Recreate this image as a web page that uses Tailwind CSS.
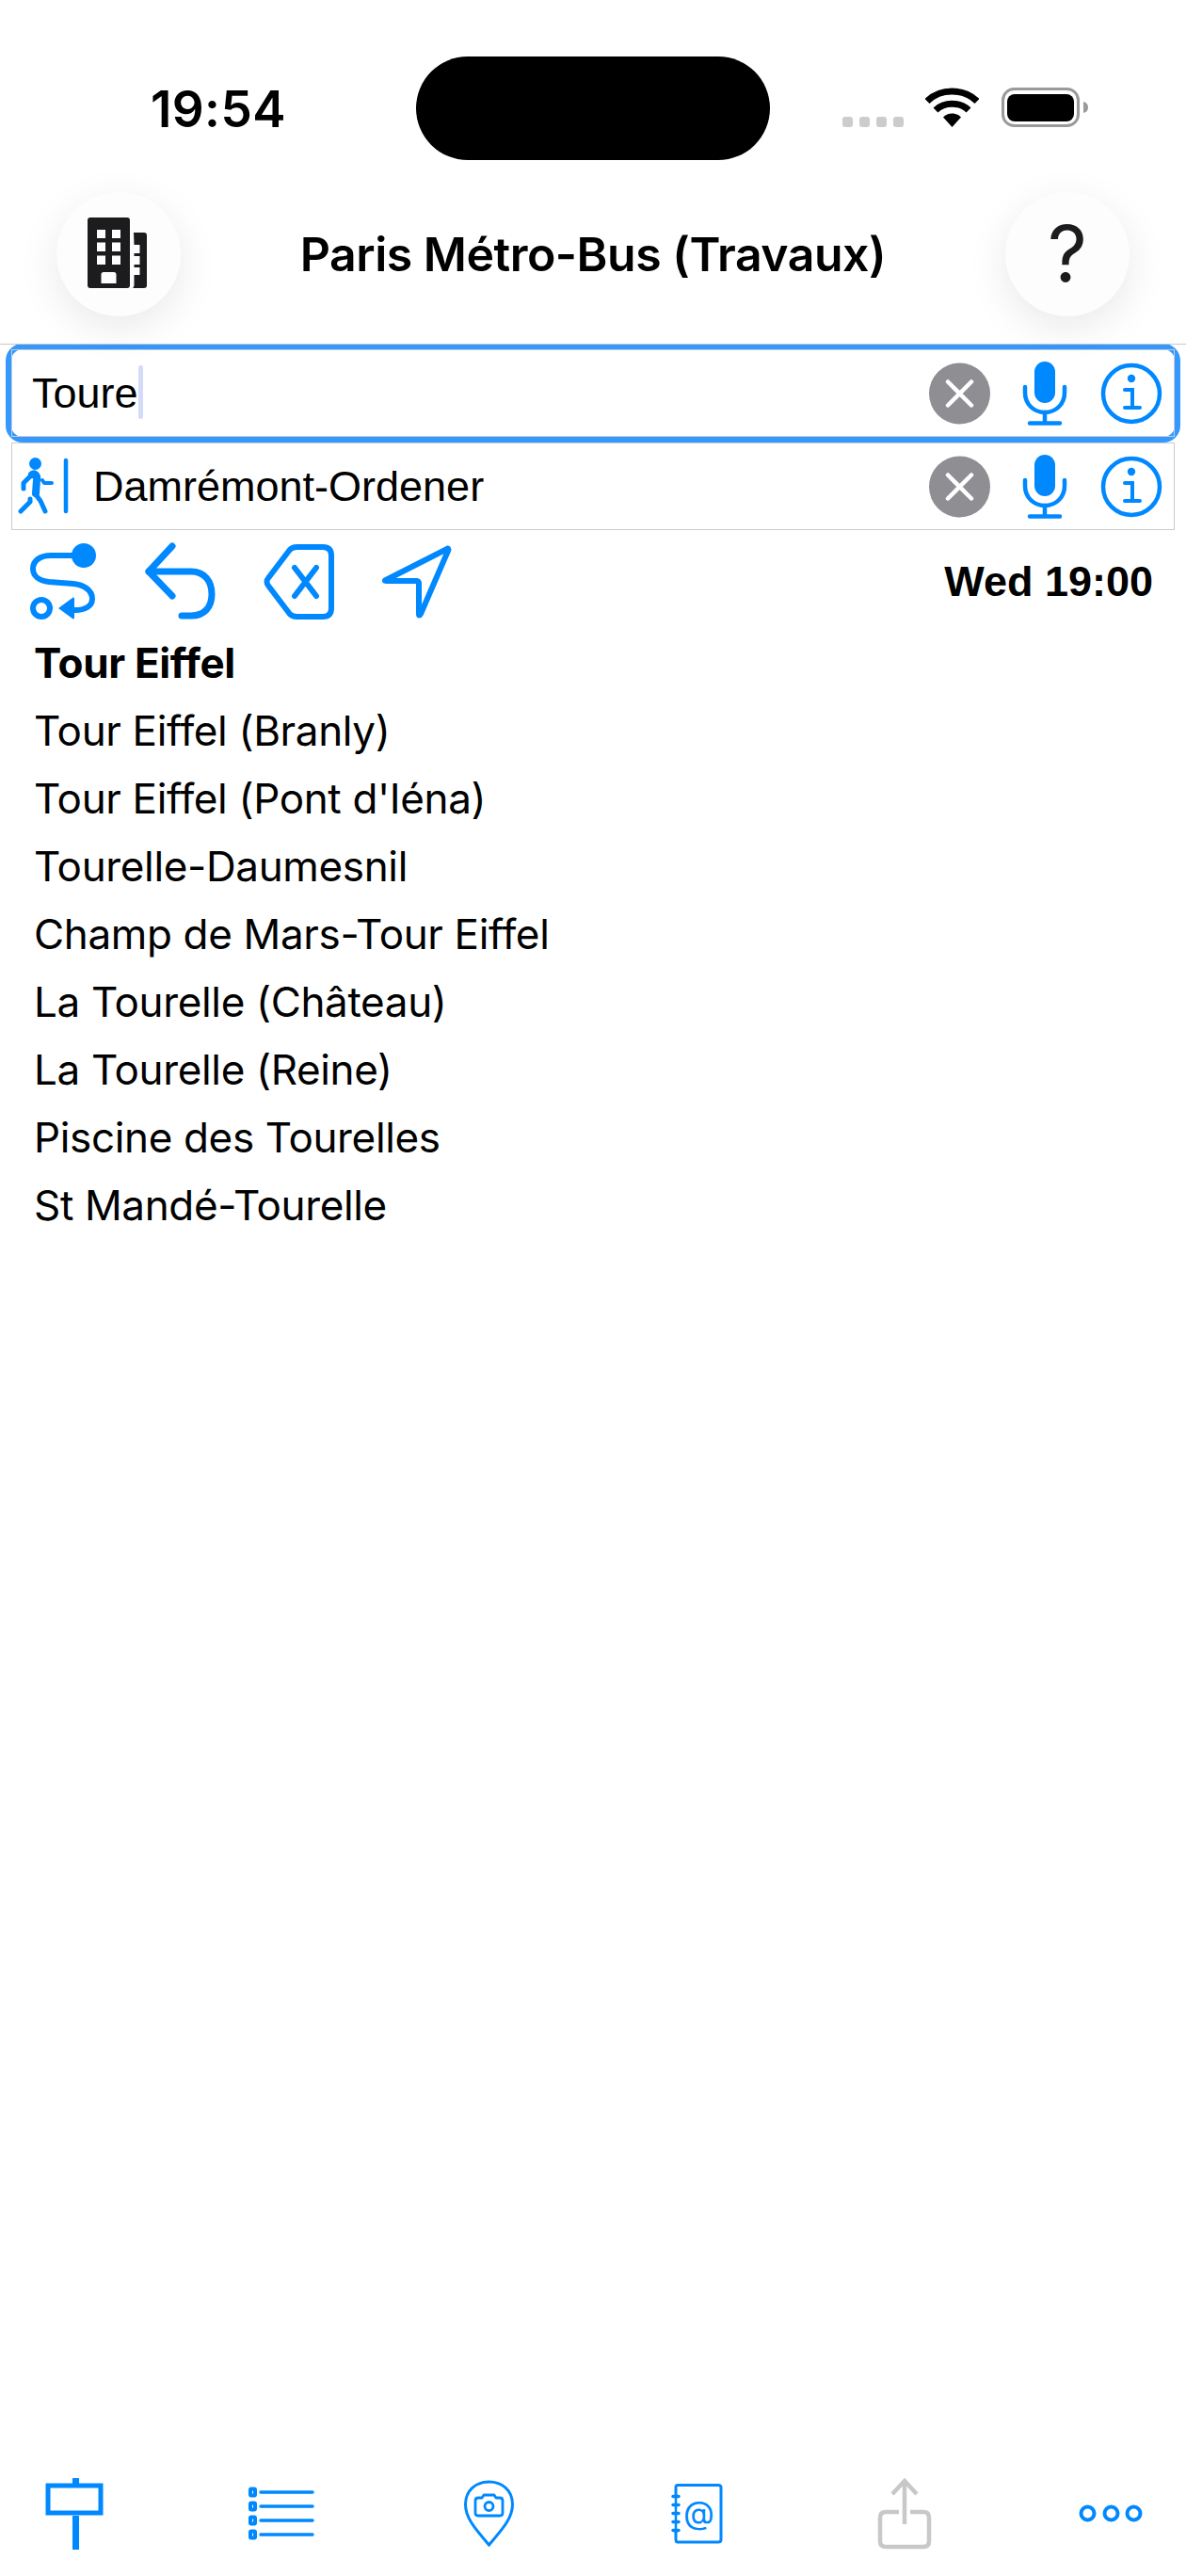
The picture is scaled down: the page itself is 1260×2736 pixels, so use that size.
<!DOCTYPE html>
<html lang="en">
<head>
<meta charset="UTF-8" />
<meta name="viewport" content="width=device-width, initial-scale=1.0" />
<title>Paris Métro-Bus (Travaux)</title>
<script src="https://cdn.jsdelivr.net/npm/@tailwindcss/browser@4"></script>
</head>
<body class="bg-white">
<div class="w-[1260px] h-[2736px] flex flex-col bg-white text-black font-['Inter',sans-serif] overflow-hidden">

  <!-- Status bar -->
  <div class="h-[204px] shrink-0 flex items-start">
    <div class="ml-[160px] mt-[86px] w-[150px] text-[53px] leading-[60px] font-semibold tracking-[0.4px]">19:54</div>
    <div class="ml-[132px] mt-[60px] w-[376px] h-[110px] rounded-full bg-black"></div>
    <div class="ml-[77px] mt-[124px] flex gap-[7px]">
      <div class="w-[11px] h-[11px] rounded-[3px] bg-[#cccccc]"></div>
      <div class="w-[11px] h-[11px] rounded-[3px] bg-[#cccccc]"></div>
      <div class="w-[11px] h-[11px] rounded-[3px] bg-[#cccccc]"></div>
      <div class="w-[11px] h-[11px] rounded-[3px] bg-[#cccccc]"></div>
    </div>
    <svg class="ml-[23px] mt-[93px]" width="57" height="42" viewBox="0 0 57 42" fill="none">
      <path d="M2 14.5C16 0.5 41 0.5 55 14.5" stroke="#000" stroke-width="7"/>
      <path d="M11 24C20 15 37 15 46 24" stroke="#000" stroke-width="7"/>
      <path d="M19 31.5C24 26 33 26 38 31.5L28.5 42Z" fill="#000"/>
    </svg>
    <svg class="ml-[24px] mt-[93px]" width="93" height="42" viewBox="0 0 93 42" fill="none">
      <rect x="1.5" y="1.5" width="80" height="39" rx="12" stroke="#9a9a9a" stroke-width="3"/>
      <rect x="6" y="7" width="71" height="29" rx="8" fill="#000"/>
      <path d="M87 15C90 15.500 92 17.500 92 21C92 24.500 90 26.500 87 27Z" fill="#9a9a9a"/>
    </svg>
  </div>

  <!-- Title bar -->
  <div class="h-[162px] shrink-0 relative z-10 border-b border-[#c8c8c8]">
    <div class="px-[60px] flex items-center justify-between h-[132px]">
      <div class="w-[132px] h-[132px] rounded-full bg-[#fdfdfd] shadow-[0_12px_44px_rgba(0,0,0,0.09)] flex items-center justify-center">
        <svg class="ml-[-3px] mt-[-3px]" width="63" height="76" viewBox="0 0 63 76">
          <path fill-rule="evenodd" fill="#1c1c1e" d="M3 0H42C44 0 45 1 45 3V72C45 74 44 75 42 75H3C1 75 0 74 0 72V3C0 1 1 0 3 0ZM10 13V22H19V13ZM26 13V22H35V13ZM10 26.500V36H19V26.500ZM26 26.500V36H35V26.500ZM10 40.500V50H19V40.500ZM26 40.500V50H35V40.500ZM17 58C15.500 58 14.500 59 14.500 60.500V70H30.500V60.500C30.500 59 29.500 58 28 58Z"/>
          <path fill="#1c1c1e" d="M49 16H60C62 16 63 17 63 19V72C63 74 62 75 60 75H48C49 74 49.500 73 49.500 71V61H55.500V53H49.500V50H55.500V41H49.500V38H55.500V29H49.500Z"/>
        </svg>
      </div>
      <div class="text-[50px] leading-[60px] font-semibold tracking-[-0.5px]">Paris Métro-Bus (Travaux)</div>
      <div class="w-[132px] h-[132px] rounded-full bg-[#fdfdfd] shadow-[0_12px_44px_rgba(0,0,0,0.09)] flex items-center justify-center text-[82px] leading-none text-[#1c1c1e]">?</div>
    </div>
  </div>

  <!-- Active search field -->
  <div class="mx-[6px] h-[105px] shrink-0 rounded-[18px] border-[6px] border-[#3399ff] mt-[-1px] relative">
    <div class="h-full border border-[#cccccc] flex items-center font-['Liberation_Sans',sans-serif]">
      <span class="ml-[21px] text-[45px] leading-[50px]">Toure</span>
      <span class="w-[5px] h-[57px] rounded-full bg-[#d3dbf8] mt-[-2px]"></span>
      <svg class="ml-auto mr-[12px]" width="248" height="68" viewBox="0 0 248 68" fill="none">
        <circle cx="32.500" cy="34" r="32.500" fill="#8e8e93"/>
        <path d="M20 21.500L45 46.500M45 21.500L20 46.500" stroke="#fff" stroke-width="4.500" stroke-linecap="round"/>
        <rect x="112" y="0" width="22" height="44" rx="11" fill="#0088ff"/>
        <path d="M102 27V33C102 45 111 54 123 54C135 54 144 45 144 33V27" stroke="#0088ff" stroke-width="4.500" stroke-linecap="round"/>
        <path d="M123 54V65M107 65.500H139" stroke="#0088ff" stroke-width="4.500" stroke-linecap="round"/>
        <circle cx="215" cy="34" r="30" stroke="#0088ff" stroke-width="4.500"/>
        <circle cx="215" cy="18" r="4.200" fill="#0088ff"/>
        <path d="M208 30H216V49M208 49H224" stroke="#0088ff" stroke-width="4" stroke-linecap="round"/>
      </svg>
    </div>
  </div>

  <!-- Second field -->
  <div class="mx-[12px] h-[93px] shrink-0 border border-[#cccccc] flex items-center font-['Liberation_Sans',sans-serif]">
    <svg class="ml-[6px] mt-[-1px]" width="54" height="60" viewBox="0 0 54 60" fill="none">
      <circle cx="18.500" cy="6.500" r="6.500" fill="#0088ff"/>
      <path d="M15 18C18 16 21 19 20 24L19 38" stroke="#0088ff" stroke-width="8" stroke-linecap="round"/>
      <path d="M15 18L6 27V33" stroke="#0088ff" stroke-width="5" stroke-linecap="round" stroke-linejoin="round"/>
      <path d="M18 38L24 46L29 57" stroke="#0088ff" stroke-width="5" stroke-linecap="round" stroke-linejoin="round"/>
      <path d="M13 44V47L3 57" stroke="#0088ff" stroke-width="5" stroke-linecap="round" stroke-linejoin="round"/>
      <path d="M26 24L28 27H36" stroke="#0088ff" stroke-width="4" stroke-linecap="round" stroke-linejoin="round"/>
      <path d="M51 3V57" stroke="#0088ff" stroke-width="4.500" stroke-linecap="round"/>
    </svg>
    <span class="ml-[26px] text-[45px] leading-[50px]">Damrémont-Ordener</span>
    <svg class="ml-auto mr-[12px]" width="248" height="68" viewBox="0 0 248 68" fill="none">
      <circle cx="32.500" cy="34" r="32.500" fill="#8e8e93"/>
      <path d="M20 21.500L45 46.500M45 21.500L20 46.500" stroke="#fff" stroke-width="4.500" stroke-linecap="round"/>
      <rect x="112" y="0" width="22" height="44" rx="11" fill="#0088ff"/>
      <path d="M102 27V33C102 45 111 54 123 54C135 54 144 45 144 33V27" stroke="#0088ff" stroke-width="4.500" stroke-linecap="round"/>
      <path d="M123 54V65M107 65.500H139" stroke="#0088ff" stroke-width="4.500" stroke-linecap="round"/>
      <circle cx="215" cy="34" r="30" stroke="#0088ff" stroke-width="4.500"/>
      <circle cx="215" cy="18" r="4.200" fill="#0088ff"/>
      <path d="M208 30H216V49M208 49H224" stroke="#0088ff" stroke-width="4" stroke-linecap="round"/>
    </svg>
  </div>

  <!-- Action icons and departure time -->
  <div class="h-[105px] shrink-0 flex items-start pt-[13px] pl-[30px] pr-[35px]">
    <svg width="74" height="84" viewBox="30 576 74 84" fill="none">
      <circle cx="89" cy="590" r="13" fill="#0088ff"/>
      <path d="M89 590H54C42 590 35 596 35 604C35 612 42 617 52 618L78 620C89 621 98 627 98 636C98 644 90 648 80 648H74" stroke="#0088ff" stroke-width="6" stroke-linecap="round"/>
      <path d="M62 646L77 635C78 634 79 635 79 636V656C79 657 78 658 77 657Z" fill="#0088ff"/>
      <circle cx="44" cy="646" r="9" stroke="#0088ff" stroke-width="6"/>
    </svg>
    <svg class="ml-[50px]" width="76" height="84" viewBox="154 576 76 84" fill="none">
      <path d="M183 580L158 607L183 633" stroke="#0088ff" stroke-width="7" stroke-linecap="round" stroke-linejoin="round"/>
      <path d="M158 607H203C217 607 225 617 225 631C225 645 217 654 203 654H193" stroke="#0088ff" stroke-width="7" stroke-linecap="round"/>
    </svg>
    <svg class="ml-[49px]" width="78" height="84" viewBox="279 576 78 84" fill="none">
      <path d="M307 585C309 582 312 581 316 581H343C349 581 352 584 352 590V646C352 652 349 655 343 655H316C312 655 309 654 307 651L285 622C283 620 283 616 285 614Z" stroke="#0088ff" stroke-width="6" stroke-linejoin="round"/>
      <path d="M313 603L336 633M336 603L313 633" stroke="#0088ff" stroke-width="6" stroke-linecap="round"/>
    </svg>
    <svg class="ml-[48px]" width="76" height="84" viewBox="404 576 76 84" fill="none">
      <path d="M474 583L409 616C407 617 408 617 410 617H442C443 617 444 618 444 619V652C444 654 445 654 446 652L475 585C476 583 475 582 474 583Z" stroke="#0088ff" stroke-width="6" stroke-linejoin="round"/>
    </svg>
    <div class="ml-auto mt-[17px] text-[45px] leading-[50px] font-bold font-['Liberation_Sans',sans-serif]">Wed 19:00</div>
  </div>

  <!-- Suggestions -->
  <ul class="pl-[36px] text-[44px] leading-[72px] tracking-[-0.35px]">
    <li class="font-bold">Tour Eiffel</li>
    <li>Tour Eiffel (Branly)</li>
    <li>Tour Eiffel (Pont d'Iéna)</li>
    <li>Tourelle-Daumesnil</li>
    <li>Champ de Mars-Tour Eiffel</li>
    <li>La Tourelle (Château)</li>
    <li>La Tourelle (Reine)</li>
    <li>Piscine des Tourelles</li>
    <li>St Mandé-Tourelle</li>
  </ul>

  <!-- Tab bar -->
  <div class="mt-auto h-[136px] shrink-0 flex items-start justify-between px-[44px] pt-[32px]">
    <div class="w-[70px] h-[76px] flex justify-center">
      <svg width="62" height="76" viewBox="48 2633 62 76" fill="none">
        <path d="M80.500 2633V2640M80.500 2673V2709" stroke="#0088ff" stroke-width="7"/>
        <rect x="51" y="2641" width="56" height="29" stroke="#0088ff" stroke-width="5"/>
      </svg>
    </div>
    <div class="w-[70px] h-[76px] flex justify-center">
      <svg width="70" height="76" viewBox="265 2633 70 76" fill="none">
        <path d="M278 2648H333M278 2663H333M278 2678H333M278 2693H333" stroke="#0088ff" stroke-width="3.500" stroke-linecap="round"/>
        <rect x="267" y="2644.500" width="5" height="7" rx="1" stroke="#0088ff" stroke-width="4"/>
        <rect x="267" y="2659.500" width="5" height="7" rx="1" stroke="#0088ff" stroke-width="4"/>
        <rect x="267" y="2674.500" width="5" height="7" rx="1" stroke="#0088ff" stroke-width="4"/>
        <rect x="267" y="2689.500" width="5" height="7" rx="1" stroke="#0088ff" stroke-width="4"/>
      </svg>
    </div>
    <div class="w-[70px] h-[76px] flex justify-center">
      <svg width="56" height="76" viewBox="492 2633 56 76" fill="none">
        <path d="M519.500 2704C508 2690 494.500 2677 494.500 2661C494.500 2646 505.500 2637 519.500 2637C533.500 2637 544.500 2646 544.500 2661C544.500 2677 531 2690 519.500 2704Z" stroke="#0088ff" stroke-width="3"/>
        <path d="M508 2654H512L514 2651H525L527 2654H531C533 2654 534 2655 534 2657V2670C534 2672 533 2673 531 2673H508C506 2673 505 2672 505 2670V2657C505 2655 506 2654 508 2654Z" stroke="#0088ff" stroke-width="2.800" stroke-linejoin="round"/>
        <circle cx="519.500" cy="2663" r="4.500" stroke="#0088ff" stroke-width="2.800"/>
      </svg>
    </div>
    <div class="w-[70px] h-[76px] flex justify-center">
      <svg width="56" height="76" viewBox="711 2633 56 76" fill="none">
        <path d="M717 2652V2643C717 2641 718 2640.500 719 2640.500H762C764 2640.500 765 2641 765 2643V2698C765 2700 764 2701 762 2701H719C718 2701 717 2700 717 2698V2690" stroke="#0088ff" stroke-width="3"/>
        <path d="M717 2652V2692" stroke="#0088ff" stroke-width="2.500"/>
        <path d="M714 2652.500H720M714 2661.500H720M714 2670.500H720M714 2679.500H720M714 2688.500H720" stroke="#0088ff" stroke-width="3.500" stroke-linecap="round"/>
        <text x="725" y="2682" font-family="Inter, sans-serif" font-size="34" fill="#0088ff">@</text>
      </svg>
    </div>
    <div class="w-[70px] h-[76px] flex justify-center">
      <svg width="58" height="76" viewBox="932 2633 58 76" fill="none">
        <path d="M955 2669H941C937 2669 935 2671 935 2675V2700C935 2704 937 2706 941 2706H981C985 2706 987 2704 987 2700V2675C987 2671 985 2669 981 2669H967" stroke="#c8c8c8" stroke-width="4.500"/>
        <path d="M961 2636V2682" stroke="#c8c8c8" stroke-width="4.500"/>
        <path d="M948 2650L961 2636L974 2650" stroke="#c8c8c8" stroke-width="4.500"/>
      </svg>
    </div>
    <div class="w-[70px] h-[76px] flex justify-center">
      <svg width="70" height="76" viewBox="1146 2633 70 76" fill="none">
        <circle cx="1155.500" cy="2670.500" r="7" stroke="#0088ff" stroke-width="4"/>
        <circle cx="1180.500" cy="2670.500" r="7" stroke="#0088ff" stroke-width="4"/>
        <circle cx="1204.500" cy="2670.500" r="7" stroke="#0088ff" stroke-width="4"/>
      </svg>
    </div>
  </div>
</div>
</body>
</html>
